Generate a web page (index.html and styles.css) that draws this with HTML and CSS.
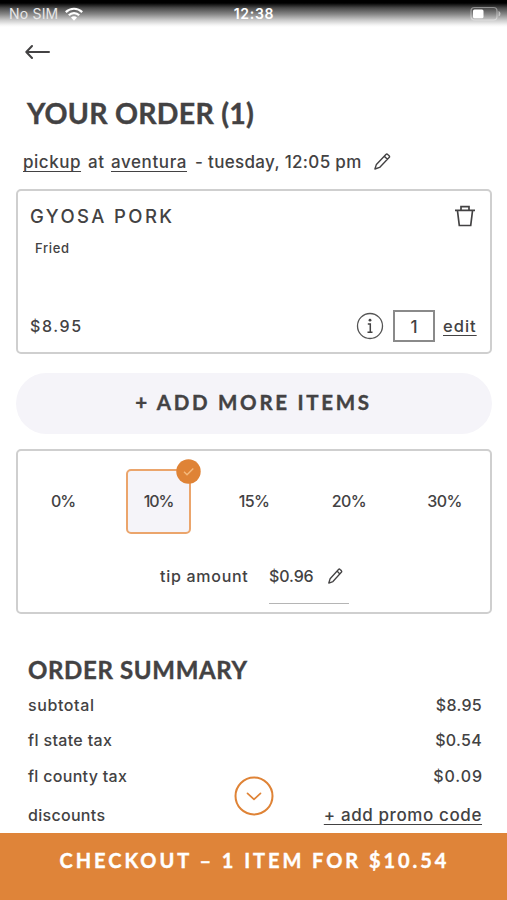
FILE: index.html
```
<!DOCTYPE html>
<html lang="en">
<head>
<meta charset="utf-8">
<title>Your order</title>
<link rel="stylesheet" href="styles.css">
</head>
<body>
<header class="status">
  <div class="carrier"><span class="sim">No SIM</span>
    <svg width="18" height="14" viewBox="0 0 18 14" fill="none" stroke="#fff" stroke-width="2.2"><path d="M.8 5.1C5.4.6 12.6.6 17.2 5.1M3.8 8.2C6.7 5.3 11.3 5.3 14.2 8.2"/><path d="M6 10.5C7.7 8.8 10.3 8.8 12 10.5L9 13.7Z" fill="#fff" stroke="none"/></svg>
  </div>
  <span class="clock">12:38</span>
  <svg class="battery" width="32" height="16" viewBox="0 0 32 16"><rect x="1" y="1.5" width="26" height="12.5" rx="3.5" fill="none" stroke="#fff" stroke-opacity=".4" stroke-width="1.2"/><rect x="3" y="3.5" width="10.5" height="8.8" rx="1.5" fill="#fff"/><path d="M28.5 5v5.5q2-.8 2-2.75T28.5 5Z" fill="#fff" opacity=".5"/></svg>
</header>
<main>
  <nav class="back"><svg width="26" height="16" viewBox="0 0 26 16" fill="none" stroke="#434243" stroke-width="2" stroke-linecap="round" stroke-linejoin="round"><path d="M24 8H1.5M7 2L1.3 8l5.7 6"/></svg></nav>
  <h1 class="title">YOUR ORDER (1)</h1>
  <div class="when">
    <a class="link pickup">pickup</a><span class="at">at</span><a class="link place">aventura</a><span class="time">- tuesday, 12:05 pm</span>
    <svg class="pencil" width="17" height="17" viewBox="0 0 17 17" fill="none" stroke="#434243" stroke-width="1.4" stroke-linejoin="round"><path d="M.9 16L2.4 11.4L11.9 1.5q.9-.9 1.8 0l1.4 1.3q.9.9 0 1.8L5.6 14.4ZM10.3 3.3l3.1 3"/></svg>
  </div>

  <section class="card item">
    <div class="row top"><span class="name">GYOSA PORK</span>
      <svg width="20" height="22" viewBox="0 0 20 22" fill="none" stroke="#434243" stroke-width="1.7"><path d="M0 5.3h20M6 5V1.7h8V5M2.5 6l1.8 14.5h11.4L17.5 6"/></svg>
    </div>
    <div class="option">Fried</div>
    <div class="row bottom"><span class="price">$8.95</span>
      <svg class="info" width="28" height="28" viewBox="0 0 28 28" fill="none" stroke="#555" stroke-width="1.3"><circle cx="14" cy="14" r="12.5"/><circle cx="14" cy="8.2" r="1.4" fill="#434243" stroke="none"/><path d="M11.8 12h2.5v8M11.5 20.3h5" stroke="#434243" stroke-width="1.5"/></svg>
      <span class="qty">1</span><a class="link edit">edit</a>
    </div>
  </section>

  <button class="add">+ ADD MORE ITEMS</button>

  <section class="card tips">
    <div class="choices">
      <span class="choice zero">0%</span>
      <span class="choice selected">10%<svg class="badge" width="25" height="25" viewBox="0 0 25 25"><circle cx="12.5" cy="12.5" r="12.2" fill="#df8336"/><path d="M8 12.8l3 3 6.3-6.4" fill="none" stroke="#f5b97c" stroke-width="1.4"/></svg></span>
      <span class="choice">15%</span>
      <span class="choice">20%</span>
      <span class="choice">30%</span>
    </div>
    <div class="tip">
      <span class="tip-label">tip amount</span>
      <span class="tip-value"><span class="amount">$0.96</span>
        <svg width="15" height="16" viewBox="0 0 17 17" preserveAspectRatio="none" fill="none" stroke="#434243" stroke-width="1.5" stroke-linejoin="round"><path d="M.9 16L2.4 11.4L11.9 1.5q.9-.9 1.8 0l1.4 1.3q.9.9 0 1.8L5.6 14.4ZM10.3 3.3l3.1 3"/></svg>
      </span>
    </div>
  </section>

  <section class="summary">
    <h2>ORDER SUMMARY</h2>
    <div class="line"><span class="subtotal">subtotal</span><span class="money">$8.95</span></div>
    <div class="line"><span class="state">fl state tax</span><span class="money">$0.54</span></div>
    <div class="line county-line"><span class="county">fl county tax</span><span class="money wide">$0.09</span></div>
    <div class="line last"><span class="discounts">discounts</span><a class="link promo">+ add promo code</a></div>
  </section>
</main>
<svg class="scroll" width="40" height="40" viewBox="0 0 40 40" fill="none" stroke="#df8336"><circle cx="20" cy="20" r="18.5" fill="#fff" stroke-width="2"/><path d="M13.5 17.3L20 23.3l6.5-6" stroke-width="1.7" stroke-linecap="round" stroke-linejoin="round"/></svg>
<footer class="checkout">CHECKOUT – 1 ITEM FOR $10.54</footer>
</body>
</html>
```
FILE: styles.css
```
* { box-sizing: border-box; }
body {
  position: relative;
  margin: 0;
  width: 507px;
  height: 900px;
  overflow: hidden;
  display: flex;
  flex-direction: column;
  background: #fff;
  color: #434243;
  font: 500 16px Inter, "Liberation Sans", sans-serif;
}
svg { display: block; flex: none; }
h1, h2 { margin: 0; font-family: Lato, sans-serif; font-weight: 700; -webkit-text-stroke: .4px; }
.link { text-decoration: underline; text-decoration-thickness: 1px; text-underline-offset: 3px; text-decoration-skip-ink: none; }

.status {
  flex: none;
  height: 27px;
  padding: 0 4px 0 9px;
  display: grid;
  grid-template-columns: 1fr auto 1fr;
  align-items: center;
  color: #fff;
  font-size: 14px;
  background: linear-gradient(#000 0, #000 3px, #4a4a4a 8px, #858585 14px, #c9c9c9 20px, #f5f5f5 25px, #fff 27px);
}
.carrier { display: flex; align-items: center; gap: 7px; font-weight: 400; }
.sim { color: #e8e8e8; letter-spacing: .2px; }
.clock { font-weight: 600; letter-spacing: .7px; margin-left: -4px; }
.battery { justify-self: end; margin-right: 1px; }

main { flex: 1; min-height: 0; padding: 0 15px 0 16px; }
.back { height: 50px; display: flex; align-items: center; padding-left: 9px; }
.title { height: 71px; line-height: 72px; padding-left: 11px; font-size: 28.5px; letter-spacing: .25px; }
.when { height: 28px; display: flex; align-items: center; padding-left: 7px; font-size: 17px; margin-bottom: 13px; }
.pickup { width: 58px; letter-spacing: .53px; }
.at { margin-left: 7px; width: 23px; letter-spacing: .5px; }
.place { width: 76px; letter-spacing: .6px; }
.time { margin-left: 8px; width: 167px; letter-spacing: .33px; white-space: nowrap; }
.pencil { margin: -2px 0 0 12px; }

.card { border: 2px solid #cfcfcf; border-radius: 5px; width: 476px; }
.item { height: 165px; padding: 13px 13px 0 12px; }
.row { display: flex; align-items: center; }
.top { height: 24px; justify-content: space-between; padding-right: 2px; }
.name { font-size: 18.5px; letter-spacing: 2.4px; }
.option { height: 40px; line-height: 41px; padding-left: 5px; font-size: 13px; letter-spacing: .63px; }
.bottom { height: 36px; margin-top: 40px; }
.price { letter-spacing: 1.6px; }
.info { margin-left: auto; }
.qty { width: 42px; height: 32px; margin: 0 8px 0 9px; border: 2px solid #8a8a8a; text-align: center; line-height: 31px; font-size: 17px; }
.edit { font-size: 16.5px; letter-spacing: 1px; width: 34px; }

.add {
  display: block;
  width: 476px;
  height: 61px;
  margin: 19px 0 15px;
  border: 0;
  border-radius: 30.5px;
  background: #f5f4f9;
  color: #434243;
  font: 700 20.5px Lato, sans-serif;
  letter-spacing: 2.7px;
  padding: 0 1px 4px 0;
  -webkit-text-stroke: .4px;
}

.tips { height: 165px; }
.choices { display: grid; grid-template-columns: 94px 97px 94px 96px 95px; height: 100px; align-items: center; justify-items: center; margin: 0 -2px; }
.choice { letter-spacing: -.6px; }
.selected {
  position: relative;
  width: 65px;
  height: 65px;
  line-height: 61px;
  text-align: center;
  border: 2px solid #eba56c;
  border-radius: 5px;
  background: #f5f4f9;
  letter-spacing: -1.2px;
}
.zero { letter-spacing: -1.2px; }
.badge { position: absolute; top: -12px; right: -12px; }
.tip { height: 53px; display: flex; padding-left: 142px; gap: 20px; line-height: 51px; }
.tip-label { width: 89px; letter-spacing: .72px; white-space: nowrap; }
.tip-value { width: 80px; height: 53px; display: flex; gap: 14px; border-bottom: 1.5px solid #b5b5b5; }
.tip-value svg { margin-top: 17px; }
.amount { letter-spacing: -.1px; width: 45px; }

.summary { padding: 39px 10px 0 12px; }
h2 { height: 34px; line-height: 33px; font-size: 24px; letter-spacing: .65px; }
.line { height: 35px; display: flex; align-items: center; justify-content: space-between; }
.county-line { height: 38px; }
.last { height: 38px; padding-top: 1px; }
.subtotal { letter-spacing: .6px; }
.state { letter-spacing: .35px; }
.county, .discounts, .money { letter-spacing: .3px; }
.wide { letter-spacing: .95px; margin-right: -1px; }
.promo { font-size: 17px; letter-spacing: .6px; }

.scroll { position: absolute; left: 234px; top: 776px; }
.checkout {
  flex: none;
  height: 67px;
  text-align: center;
  background: #df8439;
  color: #fff;
  font: 700 20px/55px Lato, sans-serif;
  letter-spacing: 2.95px;
  padding-left: 2px;
  -webkit-text-stroke: .4px;
}
```
